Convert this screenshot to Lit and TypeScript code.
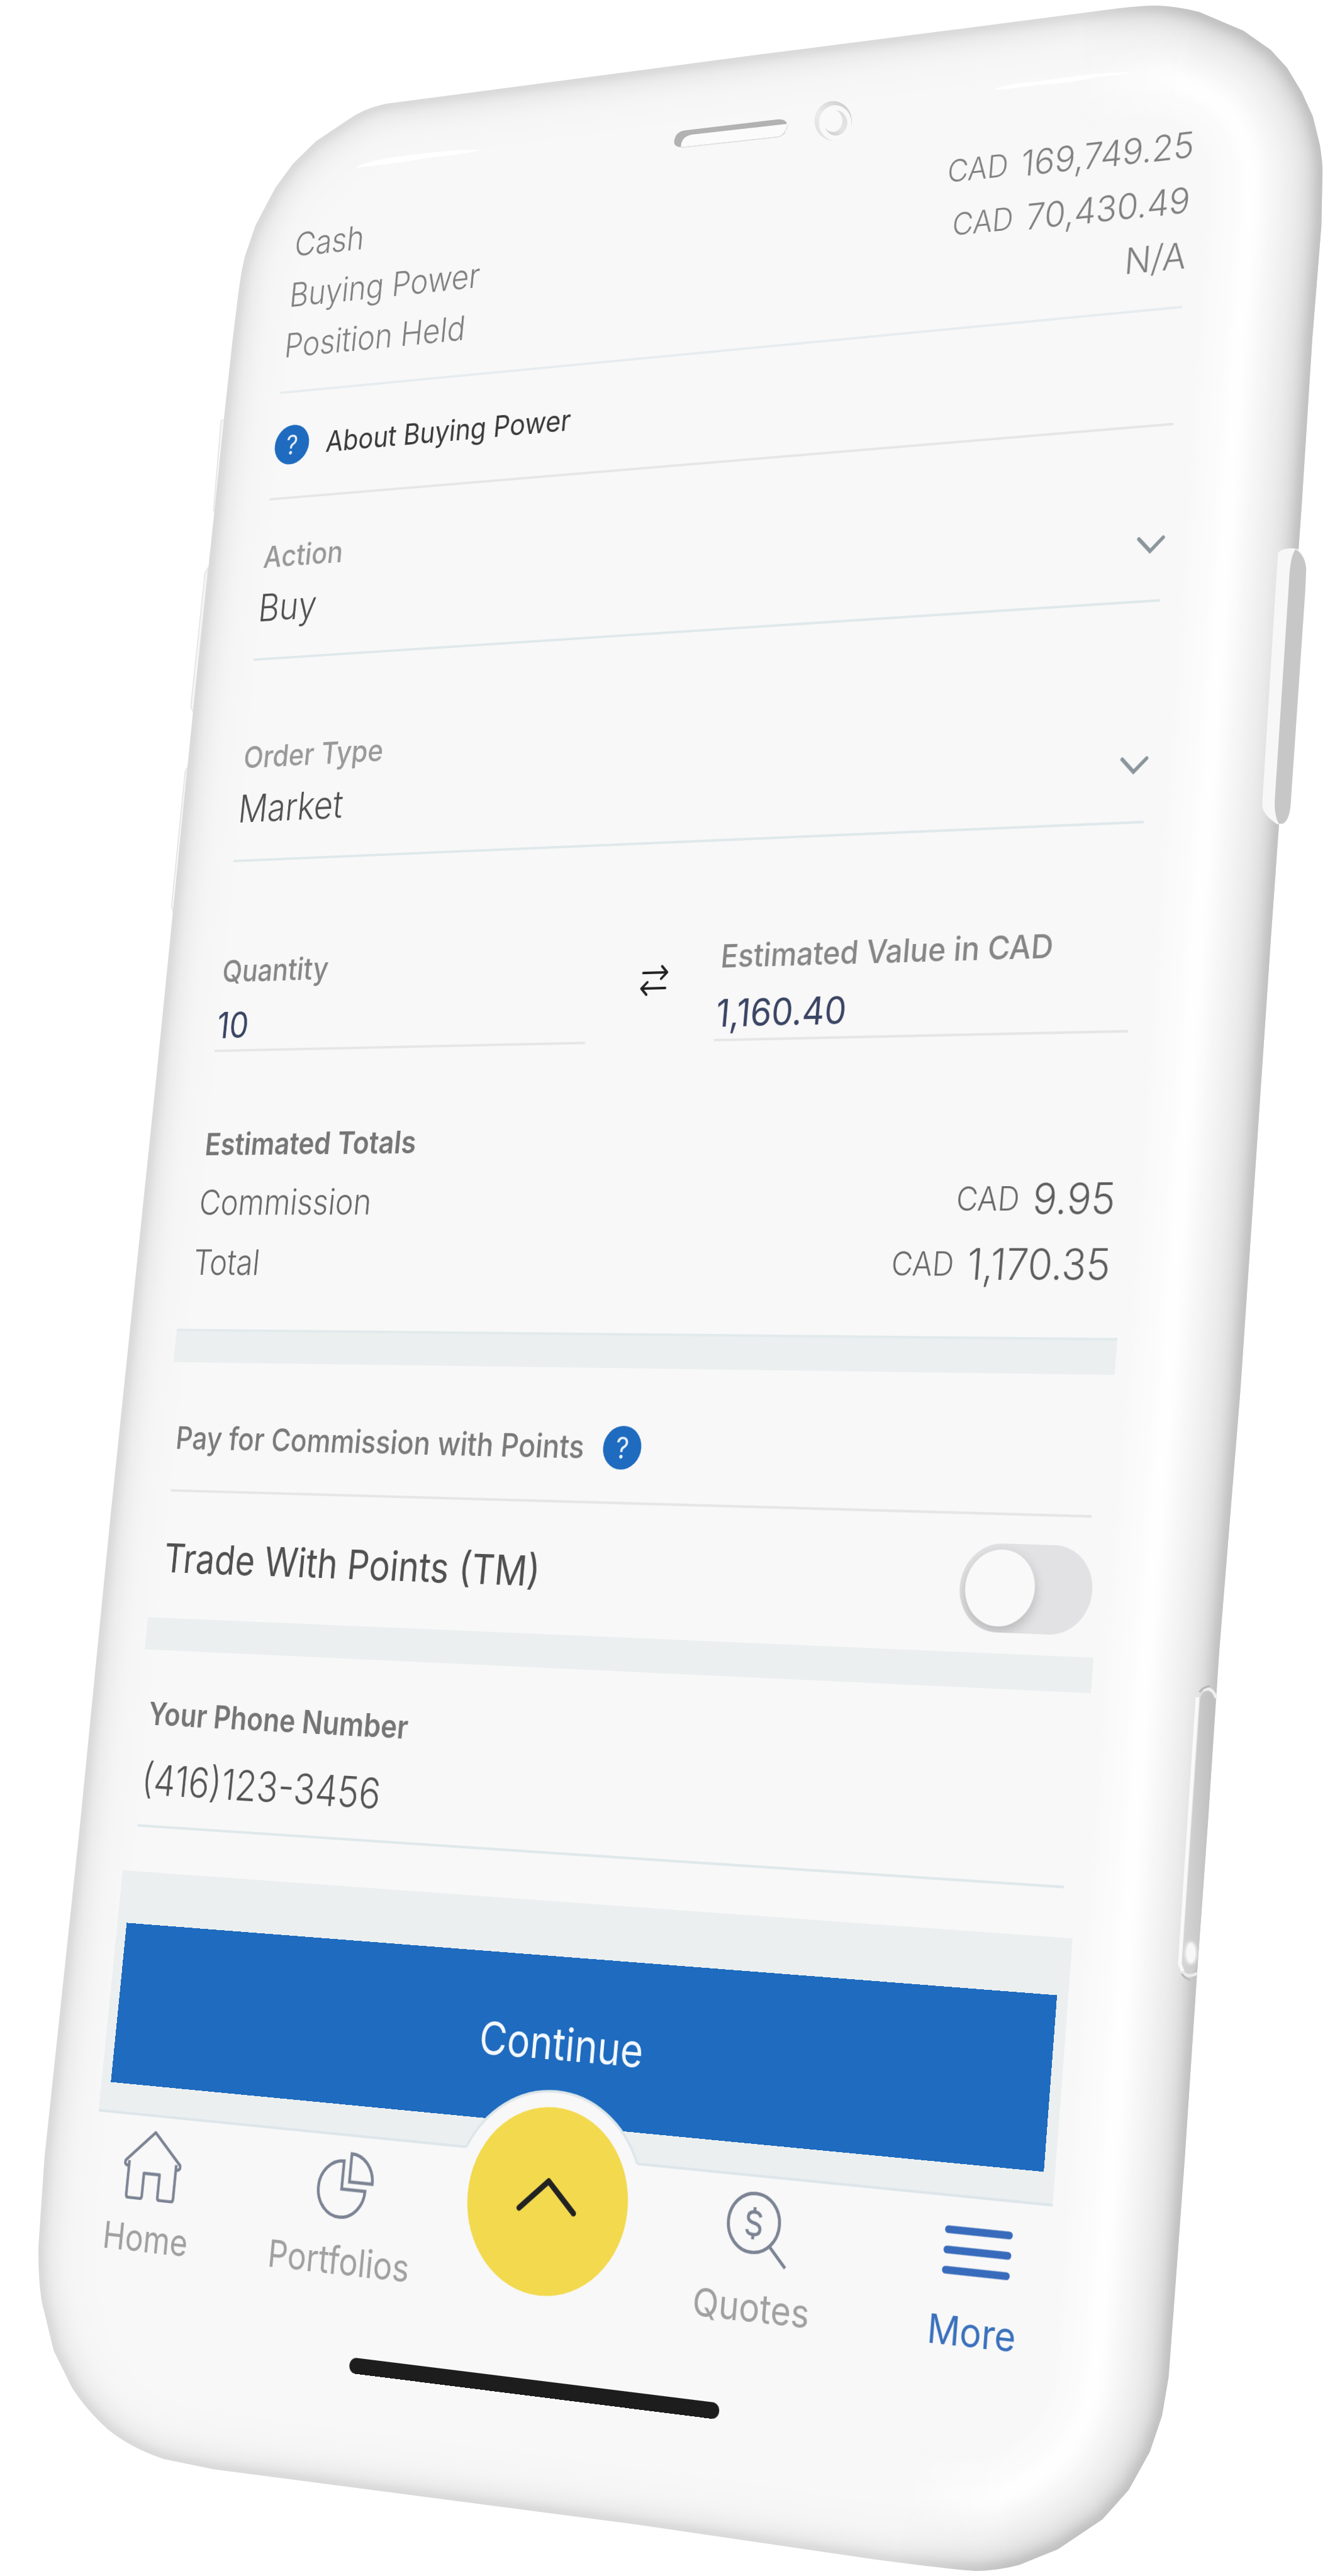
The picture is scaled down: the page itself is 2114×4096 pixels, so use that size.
import { LitElement, html, css, svg } from "lit";
import { customElement, state } from "lit/decorators.js";
import { styleMap } from "lit/directives/style-map.js";

type Point = [number, number];

/** Width of the artboard on which the handset corners are given. */
const ARTBOARD_WIDTH = 2114;
/** Flat size of the trading form, from its top edge down to the tab bar. */
const PANEL_WIDTH = 1680;
const PANEL_HEIGHT = 3162;
/** Where the four corners of the flat form land: TL, TR, BR, BL. */
const CORNERS: Point[] = [
  [458.6, 334.5],
  [1922.3, 165.1],
  [1673.4, 3505.3],
  [157, 3354.4],
];

/** Perspective matrix that carries a flat w x h rectangle onto a quadrilateral. */
function projection(w: number, h: number, quad: Point[]): string {
  const [[x0, y0], [x1, y1], [x2, y2], [x3, y3]] = quad;
  const dx1 = x1 - x2;
  const dx2 = x3 - x2;
  const dy1 = y1 - y2;
  const dy2 = y3 - y2;
  const sx = x0 - x1 + x2 - x3;
  const sy = y0 - y1 + y2 - y3;
  const den = dx1 * dy2 - dx2 * dy1;
  const g = (sx * dy2 - dx2 * sy) / den;
  const k = (dx1 * sy - sx * dy1) / den;
  const m = [
    (x1 - x0 + g * x1) / w, (y1 - y0 + g * y1) / w, 0, g / w,
    (x3 - x0 + k * x3) / h, (y3 - y0 + k * y3) / h, 0, k / h,
    0, 0, 1, 0,
    x0, y0, 0, 1,
  ];
  return `matrix3d(${m.map((n) => n.toFixed(10)).join(",")})`;
}

const BODY =
  "M765 205 L1500 108 L1860 62 L2184 20 Q2240 12 2285 11 Q2330 13 2371 24 L2458 61 L2512 99 L2544 134 L2573 182 L2595 230 L2609 287 Q2615 325 2614 345 L2612 446 L2594 670 L2573 1000 L2513 1843 L2452 2748 L2410 3266 L2388 3600 L2366 3905 L2342 4267 L2321 4553 L2310 4700 L2297 4777 L2273 4848 L2231 4924 L2179 4982 L2091 5041 L2015 5072 Q1970 5084 1928 5084 Q1880 5081 1728 5061 L1250 4991 L422 4883 L325 4863 Q260 4842 213 4804 Q170 4765 142 4721 L106 4648 L82 4549 Q75 4500 76 4442 L88 4266 L159 3600 L219 2993 L307 2150 L382 1403 L425 1000 L446 797 L460 670 L472 574 Q476 540 484 507 L505 446 L544 372 L579 324 L625 279 L688 237 Q720 214 765 205 Z";

const EDGE_TONES: [number, string][] = [
  [220, "#f7f7f7"],
  [150, "#f5f5f5"],
  [100, "#f1f1f1"],
  [66, "#ececec"],
  [38, "#e4e4e4"],
  [18, "#d9d9d9"],
  [6, "#cccccc"],
];

const SIDE_TONES: [number, string][] = [
  [440, "#f9f9f9"],
  [390, "#fbfbfb"],
  [330, "#fefefe"],
  [250, "#fafafa"],
  [210, "#f5f5f5"],
  [160, "#efefef"],
  [110, "#e7e7e7"],
  [70, "#dedede"],
  [40, "#cecece"],
  [18, "#bcbcbc"],
];

@customElement("handset-body")
class HandsetBody extends LitElement {
  static styles = css`
    :host {
      display: block;
      width: 100%;
      height: 100%;
    }
    svg {
      display: block;
      width: 100%;
      height: 100%;
    }
  `;

  render() {
    return html`
      <svg viewBox="0 0 2629 5094" preserveAspectRatio="none" aria-hidden="true">
        <defs>
          <clipPath id="hull"><path d=${BODY} /></clipPath>
          <filter id="soft" x="-5%" y="-5%" width="110%" height="110%">
            <feGaussianBlur stdDeviation="9" />
          </filter>
          <filter id="fine" x="-20%" y="-20%" width="140%" height="140%">
            <feGaussianBlur stdDeviation="3" />
          </filter>
          <linearGradient id="fade" gradientUnits="userSpaceOnUse" x1="2130" y1="150" x2="2350" y2="166">
            <stop offset="0" stop-color="#000" />
            <stop offset="1" stop-color="#fff" />
          </linearGradient>
          <mask id="side" maskUnits="userSpaceOnUse" x="0" y="0" width="2629" height="5094">
            <rect width="2629" height="5094" fill="url(#fade)" />
          </mask>
          <linearGradient id="rocker" x1="0" y1="0" x2="1" y2="0">
            <stop offset="0" stop-color="#d6d6d6" />
            <stop offset="1" stop-color="#bdbdbd" />
          </linearGradient>
          <linearGradient id="lens" x1="0" y1="1" x2="1" y2="0">
            <stop offset="0" stop-color="#dddddd" />
            <stop offset="0.4" stop-color="#ebebeb" />
            <stop offset="1" stop-color="#c8c8c8" />
          </linearGradient>
          <linearGradient id="glass" x1="0" y1="1" x2="1" y2="0">
            <stop offset="0" stop-color="#c8c8c8" />
            <stop offset="0.5" stop-color="#e4e4e4" />
            <stop offset="1" stop-color="#dedede" />
          </linearGradient>
        </defs>

        <g fill="#f6f6f6" stroke="#e4e4e4" stroke-width="2">
          <path d="M444 829 L437 832 L422 1010 L428 1010 Z" />
          <path d="M412 1121 L405 1134 L377 1398 L382 1408 Z" />
          <path d="M371 1517 L366 1526 L339 1792 L343 1806 Z" />
        </g>

        <path d=${BODY} fill="#f8f8f8" />
        <g clip-path="url(#hull)">
          <g filter="url(#soft)" fill="none">
            ${EDGE_TONES.map(([w, c]) => svg`<path d=${BODY} stroke=${c} stroke-width=${w} />`)}
          </g>
          <g mask="url(#side)">
            <g filter="url(#soft)" fill="none">
              ${SIDE_TONES.map(([w, c]) => svg`<path d=${BODY} stroke=${c} stroke-width=${w} />`)}
            </g>
          </g>
        </g>

        <path d="M702 331 Q740 314 800 308 Q900 294 951 297 Q900 307 860 310 Q760 327 702 331 Z" fill="#fff" />
        <path d="M1964 178 Q1980 166 2060 160 Q2170 142 2238 143 Q2215 149 2170 152 Q2120 164 2050 168 Q2000 176 1964 178 Z" fill="#fff" />

        <path d="M1346 291 Q1330 290 1333 277 Q1336 261 1352 258 L1538 236 Q1554 235 1556 246 L1552 262 Q1548 269 1538 271 Z" fill="#b2b2b2" />
        <path d="M1346 291 Q1346 270 1368 266 L1556 245 Q1557 262 1540 270 Z" fill="#fbfbfb" />
        <path d="M1346 292 L1538 271 Q1552 267 1557 247" fill="none" stroke="#e2e2e2" stroke-width="2" />

        <ellipse cx="1647" cy="239" rx="37" ry="39" fill="url(#lens)" />
        <ellipse cx="1651" cy="243" rx="32" ry="35" fill="#f9f9f9" />
        <ellipse cx="1652" cy="243" rx="23" ry="25" fill="url(#glass)" />
        <ellipse cx="1646" cy="239" rx="19" ry="22" fill="#f9f9f9" />

        <path d="M2526 1094 Q2532 1084 2556 1084 L2566 1086 Q2580 1098 2582 1125 L2580 1170 L2551 1594 Q2548 1622 2536 1629 L2525 1630 Q2494 1610 2495 1590 Z" fill="#f7f7f7" />
        <path d="M2561 1086 Q2580 1098 2582 1125 L2580 1170 L2551 1594 Q2548 1622 2536 1629 L2528 1629 Q2518 1612 2520 1580 L2548 1150 Q2550 1100 2561 1086 Z" fill="#c7c7c7" />

        <path d="M2367 3356 L2332 3884 L2338 3898" fill="none" stroke="#f9f9f9" stroke-width="7" />
        <path d="M2378 3342 Q2396 3334 2404 3358" fill="none" stroke="#efefef" stroke-width="6" />
        <path d="M2371 3346 Q2378 3336 2392 3334" fill="none" stroke="#b9b9b9" stroke-width="4" />
        <path d="M2372 3362 Q2374 3344 2390 3344 Q2402 3352 2402 3369 L2370 3842 Q2368 3900 2353 3904 Q2337 3900 2337 3879 Z" fill="url(#rocker)" />
        <ellipse cx="2354" cy="3862" rx="11" ry="22" fill="#fbfbfb" filter="url(#fine)" />
        <ellipse cx="2354" cy="3862" rx="9" ry="19" fill="#f8f8f8" />
        <path d="M2337 3900 Q2348 3912 2366 3902" fill="none" stroke="#ececec" stroke-width="6" />
        <path d="M2336 3903 Q2342 3912 2353 3916" fill="none" stroke="#bcbcbc" stroke-width="4" />
      </svg>
    `;
  }
}

interface Line {
  label: string;
  currency?: string;
  value: string;
}

@customElement("trade-ticket")
class TradeTicket extends LitElement {
  static styles = css`
    :host {
      display: block;
      font-family: Inter, "Liberation Sans", sans-serif;
      font-weight: 300;
      color: #808080;
    }
    * {
      box-sizing: border-box;
    }
    dl,
    dd,
    h2,
    p {
      margin: 0;
    }
    button,
    input,
    select {
      margin: 0;
      padding: 0;
      border: 0;
      border-radius: 0;
      background: none;
      appearance: none;
      font: inherit;
      color: inherit;
      outline: none;
    }
    svg {
      display: block;
    }
    .summary {
      margin: 0 20px;
      padding: 18px 0 36px;
      border-bottom: 4px solid #e6ecef;
    }
    .line {
      display: flex;
      justify-content: space-between;
      align-items: center;
      height: 88px;
      font-size: 58px;
    }
    .amount {
      display: flex;
      align-items: center;
      gap: 22px;
    }
    .currency {
      font-size: 50px;
    }
    .about {
      display: flex;
      align-items: center;
      gap: 34px;
      height: 184px;
      margin: 0 20px;
      border-bottom: 4px solid #e6e6e6;
      font-size: 49px;
      font-weight: 400;
      color: #3a3a3a;
    }
    .help {
      display: grid;
      place-items: center;
      flex: none;
      width: 68px;
      height: 68px;
      border-radius: 50%;
      background: #1e6bbf;
      color: #e8f0f8;
      font-size: 46px;
      font-weight: 400;
      line-height: 68px;
    }
    .field {
      display: flex;
      flex-direction: column;
      gap: 17px;
      margin: 0 20px;
      padding: 68px 0 46px;
      border-bottom: 4px solid #dfe8eb;
    }
    .field.order {
      padding-top: 135px;
    }
    .label {
      font-size: 51px;
      line-height: 60px;
      font-weight: 500;
      color: #999;
    }
    .label.strong {
      color: #868686;
    }
    .label.dark {
      color: #757575;
      font-weight: 600;
    }
    .picker {
      display: grid;
      grid-template-columns: 1fr 46px;
      align-items: center;
    }
    .picker select {
      grid-area: 1 / 1 / 2 / 3;
      height: 80px;
      font-size: 64px;
      line-height: 80px;
      color: #505050;
    }
    .picker svg {
      grid-area: 1 / 2 / 2 / 3;
      pointer-events: none;
    }
    .amounts {
      display: grid;
      grid-template-columns: 704px 1fr 704px;
      margin: 0 20px;
      padding-top: 154px;
    }
    .entry {
      display: flex;
      flex-direction: column;
      gap: 25px;
      padding-bottom: 6px;
      border-bottom: 4px solid #e6e6e6;
    }
    .entry input {
      width: 100%;
      height: 70px;
      font-size: 60px;
      font-weight: 400;
      color: #3a4463;
    }
    .swap {
      justify-self: center;
      align-self: start;
      margin-top: 40px;
      color: #222;
    }
    .totals {
      margin: 0 20px;
      padding: 124px 0 61px;
      color: #686868;
    }
    .totals .label {
      margin-bottom: 16px;
      color: #757575;
      font-weight: 600;
    }
    .totals .line {
      height: 99px;
    }
    .totals .value {
      font-size: 66px;
      color: #5e5e5e;
    }
    .band {
      height: 52px;
      background: #ebeff0;
    }
    .band.first {
      height: 55px;
      border-top: 4px solid #e2eaeb;
    }
    .points {
      display: flex;
      align-items: center;
      gap: 34px;
      height: 212px;
      margin: 0 20px;
      padding-top: 40px;
      border-bottom: 4px solid #e6e6e6;
    }
    .points .label {
      color: #7a7a7a;
    }
    .redeem {
      display: flex;
      justify-content: space-between;
      align-items: center;
      height: 205px;
      margin: 0 10px 0 20px;
      padding-top: 10px;
      font-size: 65px;
      font-weight: 400;
      color: #505050;
    }
    .toggle {
      display: flex;
      align-items: center;
      width: 216px;
      height: 132px;
      padding: 0 9px;
      border-radius: 66px;
      background: #e2e2e4;
      overflow: hidden;
    }
    .toggle::before {
      content: "";
      width: 114px;
      height: 114px;
      border-radius: 50%;
      background: #f9f9f9;
      box-shadow: 0 8px 20px rgba(0, 0, 0, 0.2);
    }
    .toggle:checked {
      justify-content: flex-end;
      background: #1e6bbf;
    }
    .contact {
      gap: 35px;
      padding: 73px 0 33px;
    }
    .contact input {
      height: 80px;
      font-size: 67px;
      color: #555;
    }
    .submit {
      display: flex;
      margin-top: 71px;
      padding: 83px 18px 44px;
      background: #ebeff0;
    }
    .submit button {
      flex: 1;
      height: 253px;
      padding-top: 8px;
      background: #1e6bbf;
      color: #f4f8fc;
      font-size: 68px;
      font-weight: 400;
    }
    .tabs {
      position: relative;
      border-top: 4px solid #dde6ea;
    }
    .notch {
      position: absolute;
      top: -102px;
      left: 680px;
    }
    .tab-row {
      display: grid;
      grid-template-columns: repeat(5, 1fr);
      margin: 0 -68px;
      padding-top: 21px;
    }
    .tab {
      display: flex;
      flex-direction: column;
      align-items: center;
      gap: 24px;
      font-size: 58px;
      line-height: 70px;
      color: #a0a0a0;
      text-decoration: none;
      font-weight: 400;
    }
    .tab svg {
      stroke: #7c8494;
    }
    .tab.current {
      color: #3a70bd;
    }
    .tab.current svg {
      stroke: #386bbb;
    }
    .launcher {
      position: relative;
      justify-self: center;
      width: 282px;
      height: 282px;
      margin: -95px 0 -62px;
      border-radius: 50%;
      background: #f2d94e;
      display: grid;
      place-items: center;
    }
    .home-bar {
      width: 650px;
      height: 24px;
      margin: 108px auto 0;
      border-radius: 12px;
      background: #1d1d1d;
    }
  `;

  private funds: Line[] = [
    { label: "Cash", currency: "CAD", value: "169,749.25" },
    { label: "Buying Power", currency: "CAD", value: "70,430.49" },
    { label: "Position Held", value: "N/A" },
  ];

  private totals: Line[] = [
    { label: "Commission", currency: "CAD", value: "9.95" },
    { label: "Total", currency: "CAD", value: "1,170.35" },
  ];

  private line({ label, currency, value }: Line) {
    return html`<div class="line">
      <dt>${label}</dt>
      <dd class="amount">
        ${currency ? html`<span class="currency">${currency}</span>` : ""}
        <span class="value">${value}</span>
      </dd>
    </div>`;
  }

  private picker(id: string, label: string, extra: string, options: string[]) {
    return html`<div class="field ${extra}">
      <label class="label" for=${id}>${label}</label>
      <div class="picker">
        <select id=${id}>
          ${options.map((o) => html`<option>${o}</option>`)}
        </select>
        <svg width="46" height="28" viewBox="0 0 46 28" fill="none" stroke="#8b959c" stroke-width="6" stroke-linecap="round">
          <path d="M3 4 L23 24 L43 4" />
        </svg>
      </div>
    </div>`;
  }

  render() {
    return html`
      <dl class="summary">${this.funds.map((l) => this.line(l))}</dl>
      <p class="about">
        <button class="help" aria-label="Help">?</button>
        <span>About Buying Power</span>
      </p>
      ${this.picker("action", "Action", "", ["Buy"])}
      ${this.picker("order", "Order Type", "order", ["Market"])}

      <div class="amounts">
        <div class="entry">
          <label class="label strong" for="qty">Quantity</label>
          <input id="qty" value="10" />
        </div>
        <button class="swap" aria-label="Swap">
          <svg width="50" height="50" viewBox="0 0 50 50" fill="none" stroke="currentColor" stroke-width="4" stroke-linecap="round" stroke-linejoin="round">
            <path d="M4 13 H47 M37 3 L47 13 L37 23" />
            <path d="M46 38 H3 M13 28 L3 38 L13 48" />
          </svg>
        </button>
        <div class="entry">
          <label class="label strong" for="est">Estimated Value in CAD</label>
          <input id="est" value="1,160.40" />
        </div>
      </div>

      <section class="totals">
        <h2 class="label">Estimated Totals</h2>
        <dl>${this.totals.map((l) => this.line(l))}</dl>
      </section>
      <div class="band first"></div>

      <div class="points">
        <span class="label">Pay for Commission with Points</span>
        <button class="help" aria-label="Help">?</button>
      </div>
      <div class="redeem">
        <label for="redeem">Trade With Points (TM)</label>
        <input id="redeem" class="toggle" type="checkbox" />
      </div>
      <div class="band"></div>

      <div class="field contact">
        <label class="label dark" for="phone">Your Phone Number</label>
        <input id="phone" type="tel" value="(416)123-3456" />
      </div>

      <div class="submit"><button>Continue</button></div>

      <nav class="tabs">
        <svg class="notch" width="320" height="110" viewBox="0 0 320 110" fill="none">
          <path d="M9 110 V100 A167 167 0 0 1 311 100 V110 Z" fill="#f8f8f8" />
          <path d="M9 100 A167 167 0 0 1 311 100" stroke="#dde6ea" stroke-width="4" />
        </svg>
        <div class="tab-row">
          <a class="tab" href="#home">
            <svg width="110" height="110" viewBox="0 0 110 110" fill="none" stroke-width="5" stroke-linejoin="round">
              <path d="M55 3 L107 50 Q110 57 102 58 L100 59 V103 Q100 108 95 108 H75 Q70 108 70 103 V68 H40 V103 Q40 108 35 108 H15 Q10 108 10 103 V59 L8 58 Q0 57 3 50 Z M10 50 V60 M100 50 V60" />
            </svg>
            Home
          </a>
          <a class="tab" href="#portfolios">
            <svg width="104" height="110" viewBox="0 0 104 110" fill="none" stroke-width="5">
              <path d="M46 17 A43 43 0 1 0 89 60 H46 Z" />
              <path d="M59 5 V48 H101 A42 43 0 0 0 59 5 Z" />
            </svg>
            Portfolios
          </a>
          <button class="launcher" aria-label="Open menu">
            <svg width="110" height="70" viewBox="0 0 110 70" fill="none" stroke="#222" stroke-width="9" stroke-linecap="round" stroke-linejoin="round">
              <path d="M7 49 L55 5 L103 49" />
            </svg>
          </button>
          <a class="tab" href="#quotes">
            <svg width="112" height="110" viewBox="0 0 112 110" fill="none" stroke-width="5">
              <circle cx="50" cy="46" r="43" />
              <path d="M79 78 L108 107" />
              <path d="M61 37 Q59 30 50 30 Q40 30 40 38 Q40 44 50 46 Q61 48 61 55 Q61 63 50 63 Q40 63 39 56 M50 23 V30 M50 63 V70" />
            </svg>
            Quotes
          </a>
          <a class="tab current" href="#more">
            <svg width="110" height="110" viewBox="0 0 110 110" fill="none" stroke-width="11" stroke-linecap="round">
              <path d="M6 26 H104 M6 55 H104 M6 84 H104" />
            </svg>
            More
          </a>
        </div>
        <div class="home-bar"></div>
      </nav>
    `;
  }
}

@customElement("app-root")
class AppRoot extends LitElement {
  static styles = css`
    :host {
      display: block;
      background: #fff;
    }
    .stage {
      position: relative;
      width: 100%;
      aspect-ratio: 2114 / 4096;
      overflow: hidden;
    }
    .panel {
      position: absolute;
      top: 0;
      left: 0;
      width: 1680px;
      transform-origin: 0 0;
    }
  `;

  @state() private stageWidth = document.documentElement.clientWidth;

  private observer = new ResizeObserver(([entry]) => {
    this.stageWidth = entry.contentRect.width;
  });

  connectedCallback() {
    super.connectedCallback();
    this.observer.observe(this);
  }

  disconnectedCallback() {
    this.observer.disconnect();
    super.disconnectedCallback();
  }

  render() {
    const k = this.stageWidth / ARTBOARD_WIDTH;
    const quad = CORNERS.map(([x, y]): Point => [x * k, y * k]);
    return html`
      <div class="stage">
        <handset-body></handset-body>
        <trade-ticket
          class="panel"
          style=${styleMap({ transform: projection(PANEL_WIDTH, PANEL_HEIGHT, quad) })}
        ></trade-ticket>
      </div>
    `;
  }
}
